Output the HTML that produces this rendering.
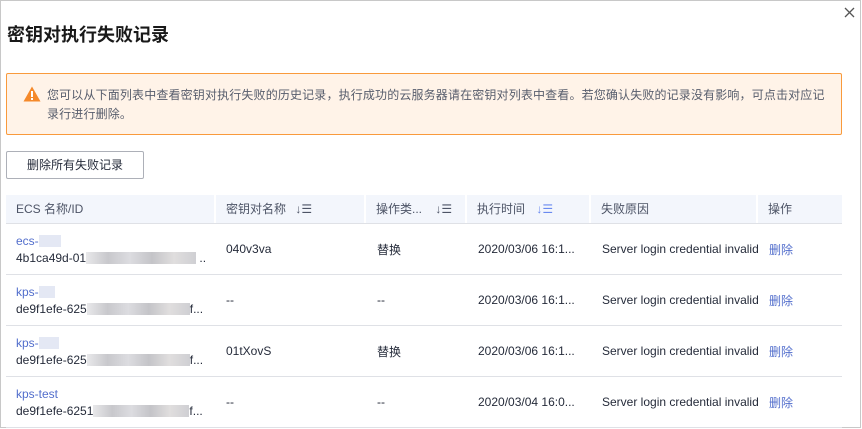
<!DOCTYPE html>
<html><head><meta charset="utf-8"><style>
*{margin:0;padding:0;box-sizing:border-box}
body{width:862px;height:429px;overflow:hidden;background:#fff;font-family:"Liberation Sans","Noto Sans CJK SC",sans-serif;color:#252b3a;position:relative}
.frame{position:absolute;left:0;top:0;width:861px;height:428px;border:1px solid #c8c8c8}
.a{position:absolute;white-space:nowrap}
.title{left:7px;top:21px;font-size:18px;font-weight:bold;color:#191919}
.alert{left:6px;top:73px;width:836px;height:62px;background:#fff3e8;border:1px solid #f99a3c;border-radius:2px}
.alert .t{position:absolute;left:40px;top:12px;font-size:12px;line-height:19px;color:#575d6c;white-space:normal;width:784px;letter-spacing:0.15px}
.btn{left:6px;top:151px;width:138px;height:28px;border:1px solid #adb0b8;border-radius:2px;font-size:12px;text-align:center;line-height:26px;color:#252b3a}
.hdr{left:6px;top:195px;width:836px;height:29px;background:#f3f6fc;border-bottom:1px solid #dfe1e6}
.hc{position:absolute;top:0;height:28px;line-height:28px;font-size:12px;color:#4d5466;border-right:2px solid #fff}
.row{position:absolute;left:6px;width:836px;height:51px;border-bottom:1px solid #dfe1e6}
.c{position:absolute;font-size:12px;color:#252b3a;white-space:nowrap}
.lnk{color:#526ecc}
.blur{display:inline-block;height:12px;vertical-align:-2px;background:linear-gradient(90deg,#e8e8ea 0,#c8c8cc 20%,#dcdce0 40%,#c4c4c8 60%,#e0dede 80%,#cfcfd3 100%)}
</style></head><body>
<div class="frame"></div>
<div class="a title">密钥对执行失败记录</div>
<svg class="a" style="left:844px;top:7px" width="11" height="11" viewBox="0 0 11 11"><path d="M1 1 L10 10 M10 1 L1 10" stroke="#555" stroke-width="1.3"/></svg>
<div class="a alert">
<svg style="position:absolute;left:16px;top:12px" width="18" height="16" viewBox="0 0 18 16"><path d="M9 0.5 L17.5 15.5 H0.5 Z" fill="#f5892a"/><rect x="8" y="5" width="2" height="6" fill="#fff"/><rect x="8" y="12" width="2" height="2" fill="#fff"/></svg>
<div class="t">您可以从下面列表中查看密钥对执行失败的历史记录，执行成功的云服务器请在密钥对列表中查看。若您确认失败的记录没有影响，可点击对应记录行进行删除。</div>
</div>
<div class="a btn">删除所有失败记录</div>
<div class="a hdr">
<div class="hc" style="left:0;width:210px;padding-left:10px">ECS 名称/ID</div>
<div class="hc" style="left:210px;width:150px;padding-left:10px">密钥对名称 <span style="margin-left:6px">↓☰</span></div>
<div class="hc" style="left:360px;width:101px;padding-left:10px">操作类... <span style="margin-left:10px">↓☰</span></div>
<div class="hc" style="left:461px;width:124px;padding-left:10px">执行时间 <span style="margin-left:8px;color:#6a8af0">↓☰</span></div>
<div class="hc" style="left:585px;width:167px;padding-left:10px">失败原因</div>
<div class="hc" style="left:752px;width:84px;padding-left:10px;border:0">操作</div>
</div>
<div class="row" style="top:224px">
<div class="c lnk" style="left:10px;top:10px">ecs-<span class="blur" style="width:22px;background:#e4e8f4"></span></div>
<div class="c" style="left:10px;top:27px">4b1ca49d-01<span class="blur" style="width:110px"></span> ..</div>
<div class="c" style="left:220px;top:18px">040v3va</div>
<div class="c" style="left:371px;top:17px">替换</div>
<div class="c" style="left:472px;top:18px">2020/03/06 16:1...</div>
<div class="c" style="left:596px;top:18px;width:158px;overflow:hidden">Server login credential invalid</div>
<div class="c lnk" style="left:763px;top:17px">删除</div>
</div>
<div class="row" style="top:275px">
<div class="c lnk" style="left:10px;top:10px">kps-<span class="blur" style="width:16px;background:#e4e8f4"></span></div>
<div class="c" style="left:10px;top:27px">de9f1efe-625<span class="blur" style="width:103px"></span>f...</div>
<div class="c" style="left:220px;top:18px">--</div>
<div class="c" style="left:371px;top:18px">--</div>
<div class="c" style="left:472px;top:18px">2020/03/06 16:1...</div>
<div class="c" style="left:596px;top:18px;width:158px;overflow:hidden">Server login credential invalid</div>
<div class="c lnk" style="left:763px;top:17px">删除</div>
</div>
<div class="row" style="top:326px">
<div class="c lnk" style="left:10px;top:10px">kps-<span class="blur" style="width:20px;background:#e4e8f4"></span></div>
<div class="c" style="left:10px;top:27px">de9f1efe-625<span class="blur" style="width:103px"></span>f...</div>
<div class="c" style="left:220px;top:18px">01tXovS</div>
<div class="c" style="left:371px;top:17px">替换</div>
<div class="c" style="left:472px;top:18px">2020/03/06 16:1...</div>
<div class="c" style="left:596px;top:18px;width:158px;overflow:hidden">Server login credential invalid</div>
<div class="c lnk" style="left:763px;top:17px">删除</div>
</div>
<div class="row" style="top:377px">
<div class="c lnk" style="left:10px;top:10px">kps-test</div>
<div class="c" style="left:10px;top:27px">de9f1efe-6251<span class="blur" style="width:96px"></span>f...</div>
<div class="c" style="left:220px;top:18px">--</div>
<div class="c" style="left:371px;top:18px">--</div>
<div class="c" style="left:472px;top:18px">2020/03/04 16:0...</div>
<div class="c" style="left:596px;top:18px;width:158px;overflow:hidden">Server login credential invalid</div>
<div class="c lnk" style="left:763px;top:17px">删除</div>
</div>
</body></html>
